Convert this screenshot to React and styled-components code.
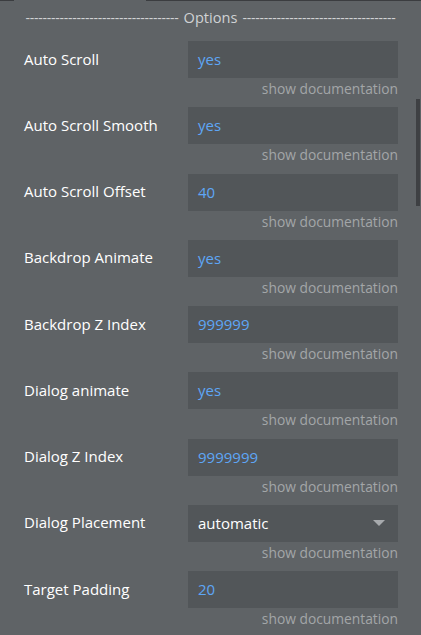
import styled, { createGlobalStyle } from "styled-components";

const Global = createGlobalStyle`
    html, body {
        margin: 0;
        padding: 0;
        background: #5f6366;
    }
    body {
        font-family: "Open Sans", "Liberation Sans", sans-serif;
        width: 421px;
        height: 635px;
        overflow: hidden;
    }
`;

const Panel = styled.div`
    position: relative;
    width: 421px;
    height: 635px;
    background: #5f6366;
    overflow: hidden;
`;

const TabLine = styled.div`
    display: flex;
    height: 1px;
    span {
        background: #3b3d40;
    }
    span:first-child {
        width: 14px;
    }
    span.active {
        width: 132px;
        background: transparent;
    }
    span:last-child {
        flex: 1;
    }
`;

const Heading = styled.div`
    display: flex;
    align-items: center;
    justify-content: center;
    gap: 5px;
    margin: 7px 24px 0 24px;
    height: 18px;
    color: #d0d2d4;
    font-size: 14.6px;
    white-space: nowrap;
`;

const Dashes = styled.span`
    font-size: 14px;
    letter-spacing: -0.25px;
`;

const List = styled.div`
    display: flex;
    flex-direction: column;
    padding-top: 15px;
`;

const Row = styled.div`
    display: grid;
    grid-template-columns: 164px 210px;
    grid-template-rows: 37px 23px;
    padding-left: 24px;
    height: 66.25px;
    box-sizing: border-box;
`;

const Label = styled.div`
    align-self: center;
    margin-top: -2px;
    color: #ffffff;
    font-size: 15px;
    font-weight: 500;
`;

const Field = styled.div`
    display: flex;
    align-items: center;
    justify-content: space-between;
    background: #525659;
    padding: 0 13px 1px 10px;
    color: ${p => (p.$plain ? "#ffffff" : "#5ea6f6")};
    font-size: 15px;
    font-weight: ${p => (p.$plain ? 500 : 400)};
`;

const Caret = styled.span`
    width: 0;
    height: 0;
    margin-top: 1px;
    border-left: 6px solid transparent;
    border-right: 6px solid transparent;
    border-top: 6px solid #a7aaad;
`;

const Doc = styled.a`
    grid-column: 2;
    justify-self: end;
    align-self: center;
    color: #a3a6a8;
    font-size: 13.8px;
    text-decoration: none;
    margin-top: -2px;
`;

const Scrollbar = styled.div`
    position: absolute;
    right: 1px;
    top: 99px;
    width: 4px;
    height: 107px;
    background: #3e4043;
`;

const options = [
    { label: "Auto Scroll", value: "yes" },
    { label: "Auto Scroll Smooth", value: "yes" },
    { label: "Auto Scroll Offset", value: "40" },
    { label: "Backdrop Animate", value: "yes" },
    { label: "Backdrop Z Index", value: "999999" },
    { label: "Dialog animate", value: "yes" },
    { label: "Dialog Z Index", value: "9999999" },
    { label: "Dialog Placement", value: "automatic", select: true },
    { label: "Target Padding", value: "20" },
];

const dashes = "-".repeat(36);

export default function App() {
    return (
        <Panel>
            <Global />
            <TabLine>
                <span />
                <span className="active" />
                <span />
            </TabLine>
            <Heading>
                <Dashes>{dashes}</Dashes>
                <span>Options</span>
                <Dashes>{dashes}</Dashes>
            </Heading>
            <List>
                {options.map(o => (
                    <Row key={o.label}>
                        <Label>{o.label}</Label>
                        <Field $plain={o.select}>
                            {o.value}
                            {o.select && <Caret />}
                        </Field>
                        <Doc href="#doc">show documentation</Doc>
                    </Row>
                ))}
            </List>
            <Scrollbar />
        </Panel>
    );
}
